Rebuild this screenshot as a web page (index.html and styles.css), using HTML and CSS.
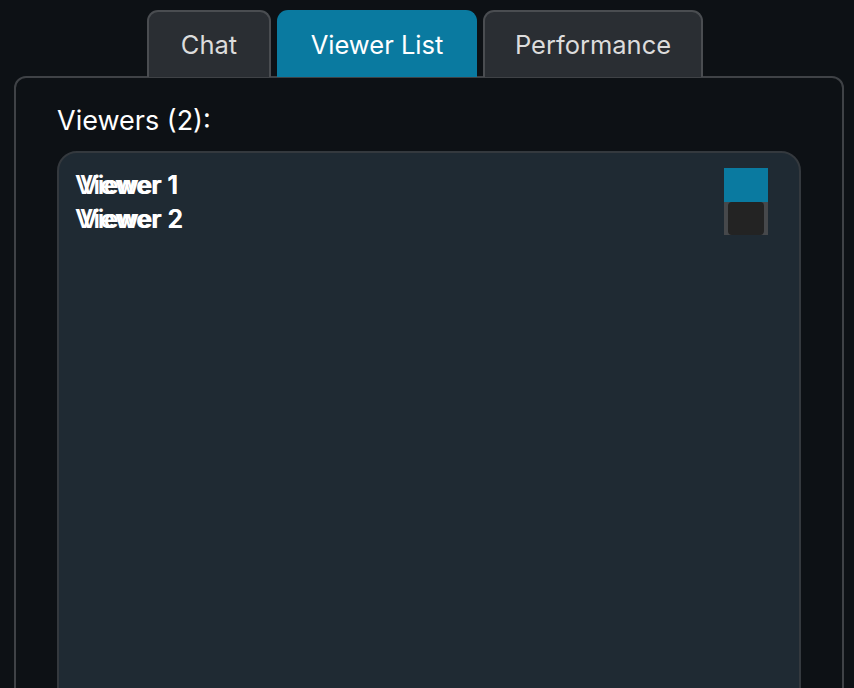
FILE: index.html
```html
<!DOCTYPE html>
<html>
<head>
<meta charset="utf-8">
<link rel="stylesheet" href="styles.css">
</head>
<body>
<div class="app">
  <div class="tabs">
    <div class="tab">Chat</div>
    <div class="tab active">Viewer List</div>
    <div class="tab perf">Performance</div>
  </div>
  <div class="panel">
    <div class="heading">Viewers (2):</div>
    <div class="list">
      <div class="names">
        <div class="name"><span class="n-bold">Viewer 1</span><span class="n-reg">Viewer 1</span></div>
        <div class="name"><span class="n-bold">Viewer 2</span><span class="n-reg">Viewer 2</span></div>
      </div>
      <div class="controls">
        <div class="ctl-blue"></div>
        <div class="ctl-dark"><div class="ctl-inner"></div></div>
      </div>
    </div>
  </div>
</div>
</body>
</html>
```

FILE: styles.css
```css
html, body {
  margin: 0;
  padding: 0;
  background: #0d1115;
  font-family: Inter, "Noto Sans", "Liberation Sans", sans-serif;
  overflow: hidden;
}
.app {
  padding-top: 10px;
}
.tabs {
  display: flex;
  justify-content: center;
  gap: 6px;
  padding-right: 4px;
}
.tab {
  box-sizing: border-box;
  height: 67px;
  width: 124px;
  border: 2px solid #4a4d51;
  border-bottom: none;
  border-radius: 11px 11px 0 0;
  background: #2a2e33;
  color: #dcdcdc;
  font-size: 25.5px;
  display: flex;
  align-items: center;
  justify-content: center;
  padding-bottom: 1px;
}
.tab.active {
  width: 200px;
  background: #0a7aa0;
  border-color: #0a7aa0;
  color: #ffffff;
}
.tab.perf {
  width: 220px;
}
.panel {
  margin: -1px 10px 0 14px;
  border: 2px solid #3f4246;
  border-radius: 12px;
  background: #0d1115;
  padding: 26px 41px 0;
  height: 640px;
}
.heading {
  color: #ffffff;
  font-size: 27px;
  line-height: 33px;
}
.list {
  margin-top: 14px;
  border: 2px solid #34393e;
  border-radius: 20px;
  background: #1f2a33;
  height: 600px;
  display: flex;
  justify-content: space-between;
  align-items: flex-start;
  padding: 15px 31px 0 16px;
}
.names {
  display: flex;
  flex-direction: column;
}
.name {
  position: relative;
  height: 34px;
  font-size: 25px;
  line-height: 34px;
  color: #ffffff;
}
.n-bold {
  font-weight: 600;
  letter-spacing: 0.3px;
  white-space: nowrap;
}
.n-reg {
  position: absolute;
  left: 5px;
  top: 0;
  font-weight: 600;
  white-space: nowrap;
  letter-spacing: -0.5px;
}
.controls {
  display: flex;
  flex-direction: column;
}
.ctl-blue {
  width: 44px;
  height: 34px;
  background: #0a7aa0;
}
.ctl-dark {
  box-sizing: border-box;
  width: 44px;
  height: 33px;
  background: #46484b;
  padding: 0 4px;
}
.ctl-inner {
  height: 100%;
  background: #232323;
  border-radius: 4px;
}
```
